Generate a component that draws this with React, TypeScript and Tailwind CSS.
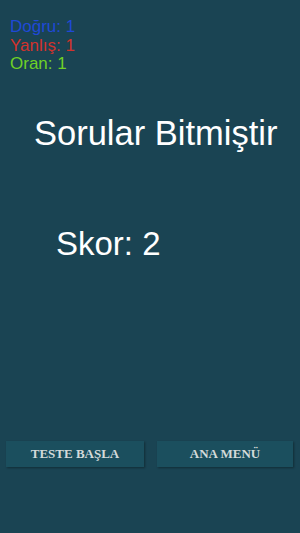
export default function App() {
  return (
    <div className="w-[300px] h-[533px] bg-[#1a4453] flex flex-col overflow-hidden" style={{ fontFamily: '"Liberation Sans", Arial, sans-serif' }}>
      {/* Stats */}
      <div className="pl-[10px] pt-[18px] flex flex-col text-[17px] leading-[18px]">
        <span className="text-[#1f49d6]">Doğru: 1</span>
        <span className="text-[#d2322c] mt-[1px]">Yanlış: 1</span>
        <span className="text-[#6fd126]">Oran: 1</span>
      </div>

      {/* Result */}
      <div className="pl-[34px] mt-[42px] text-white text-[34.5px] leading-[36px]">Sorular Bitmiştir</div>
      <div className="pl-[56px] mt-[75px] text-white text-[33px] leading-[36px]">Skor: 2</div>

      {/* Buttons */}
      <div className="mt-[179px] flex gap-[13px] pl-[6px]">
        <button className="w-[138px] h-[26px] bg-[#1b4f5e] shadow-[1px_1px_2px_rgba(0,0,0,0.35)] text-[#d3dada] text-[13px] font-bold" style={{ fontFamily: '"Liberation Serif", "Times New Roman", serif' }}>
          TESTE BAŞLA
        </button>
        <button className="w-[136px] h-[26px] bg-[#1b4f5e] shadow-[1px_1px_2px_rgba(0,0,0,0.35)] text-[#d3dada] text-[13px] font-bold" style={{ fontFamily: '"Liberation Serif", "Times New Roman", serif' }}>
          ANA MENÜ
        </button>
      </div>
    </div>
  );
}
